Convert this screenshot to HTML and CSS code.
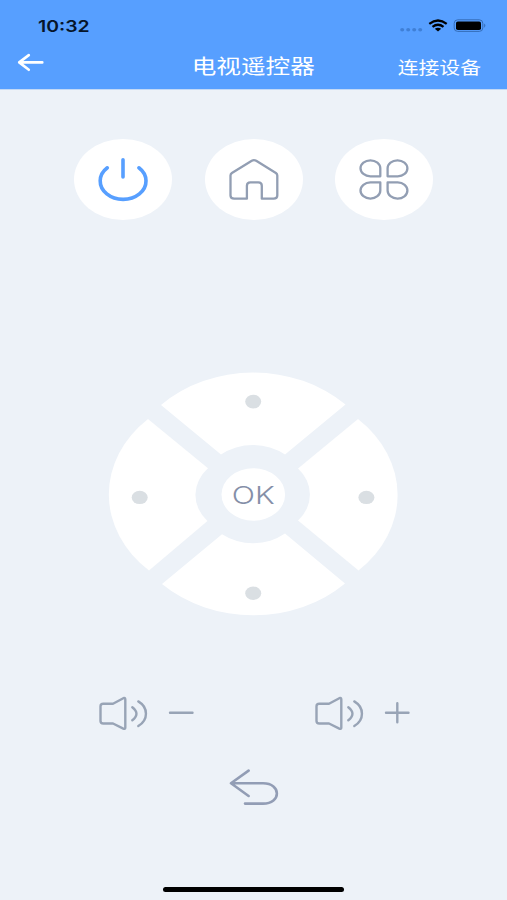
FILE: index.html
```html
<!DOCTYPE html>
<html lang="zh-CN">
<head>
    <meta charset="UTF-8">
    <meta name="viewport" content="width=device-width, initial-scale=1.0">
    <title>电视遥控器</title>
    <link rel="stylesheet" href="styles.css">
</head>
<body>

    <header class="header">
        <div class="status-bar">
            <span class="time">10:32</span>
            <svg class="status-icons" viewBox="400 16 88 20">
                <g fill="#3f7fd6">
                    <ellipse cx="402.2" cy="29.8" rx="2" ry="1.7"/>
                    <ellipse cx="408.2" cy="29.8" rx="2" ry="1.7"/>
                    <ellipse cx="414.2" cy="29.8" rx="2" ry="1.7"/>
                    <ellipse cx="420.2" cy="29.8" rx="2" ry="1.7"/>
                </g>
                <g fill="none" stroke="#000" stroke-width="2.3">
                    <path d="M429.3 23.8Q438 17.2 446.7 23.8"/>
                    <path d="M432.5 26.8Q438 22.6 443.5 26.8"/>
                </g>
                <path d="M434.8 28.8Q438 26.6 441.2 28.8L438 31.4Z"/>
                <rect x="454.2" y="19.8" width="28.6" height="11.6" rx="3.5" fill="none" stroke="#346db8"/>
                <rect x="456" y="21.4" width="25" height="8.6" rx="1.8"/>
                <path d="M484.2 23.5Q486.6 25.5 484.2 27.7Z" fill="#346db8"/>
            </svg>
        </div>
        <nav class="nav">
            <a class="back" href="#" aria-label="返回">
                <svg width="28" height="20" viewBox="17 52 28 20" fill="none" stroke="#fff" stroke-width="2.6" stroke-linecap="round" stroke-linejoin="round">
                    <path d="M42.3 62.4H19.2M28.8 55.1L19.2 62.4L28.8 69.8"/>
                </svg>
            </a>
            <h1 class="title">电视遥控器</h1>
            <a class="connect" href="#">连接设备</a>
        </nav>
    </header>

    <main class="remote">
        <div class="top-keys">
            <button class="round-key power" aria-label="电源">
                <svg viewBox="74 139 98 81">
                    <path d="M107.3 167.8A22.9 18.3 0 1 0 138.9 167.8M123 159.8V177"/>
                </svg>
            </button>
            <button class="round-key" aria-label="主页">
                <svg viewBox="205 139 98 81">
                    <path d="M230.5 175.4Q230.5 174 231.9 173L251.8 160.8Q254 159.6 256.2 160.8L275.9 173Q277.3 174 277.3 175.4V195.6Q277.3 198.7 273.6 198.7H261.8V185.8Q261.8 182.4 258.3 182.4H250.4Q246.9 182.4 246.9 185.8V198.7H234.2Q230.5 198.7 230.5 195.6Z"/>
                </svg>
            </button>
            <button class="round-key" aria-label="应用">
                <svg viewBox="335 139 98 81">
                    <path d="M380.3 176.3H370.4A9.9 8 0 1 1 380.3 168.3Z"/>
                    <path d="M387.6 176.3H397.7A9.9 8 0 1 0 387.6 168.3Z"/>
                    <path d="M380.3 182.4H370.4A9.9 8.1 0 1 0 380.3 190.5Z"/>
                    <path d="M387.6 182.4H397.7A9.9 8.1 0 1 1 387.6 190.5Z"/>
                </svg>
            </button>
        </div>

        <!-- direction pad: four sectors around the OK key -->
        <svg class="dpad" viewBox="109 373 288 242">
            <g fill="#fff">
                <path d="M161 405A130.4 109.6 0 0 1 345.5 404.5L285 454.6A50.6 42.5 0 0 0 221 454.6Z"/>
                <path d="M358 419A123.5 103.5 0 0 1 358.5 570.5L298 520.5A46 38.7 0 0 0 298 468.5Z"/>
                <path d="M345 583.5A130.4 109.6 0 0 1 162 584L222 534.3A50.6 42.5 0 0 0 285 533.6Z"/>
                <path d="M149 570.5A123 103 0 0 1 148 419L208 468.3A46 38.7 0 0 0 207.5 521Z"/>
                <ellipse cx="253.3" cy="494.5" rx="31.8" ry="26.3"/>
            </g>
            <g fill="#dadfe3">
                <ellipse cx="253.2" cy="401.6" rx="8" ry="6.9"/>
                <ellipse cx="366.4" cy="497.4" rx="8" ry="6.7"/>
                <ellipse cx="253.2" cy="593.2" rx="8" ry="6.7"/>
                <ellipse cx="139.7" cy="497.4" rx="8" ry="6.7"/>
            </g>
            <text class="ok" x="253.3" y="504" text-anchor="middle" textLength="43" lengthAdjust="spacingAndGlyphs">OK</text>
        </svg>

        <div class="volume">
            <button class="key" aria-label="音量减">
                <svg width="96" height="36" viewBox="97 695 96 36">
                    <path d="M102.3 703.7H112L122.3 698.2Q124.3 697.4 124.3 699.4V727.4Q124.3 729.4 122.3 728.6L112 723.5H102.3Q99.5 723.5 99.5 721V706.2Q99.5 703.7 102.3 703.7Z"/>
                    <path d="M131.3 707.3Q139.6 713.7 131.3 720.3M137.3 701.4C147.5 707.5 147.5 719.7 137.3 726M169 712.8H191.5"/>
                </svg>
            </button>
            <button class="key" aria-label="音量加">
                <svg width="96" height="36" viewBox="97 695 96 36">
                    <path d="M102.3 703.7H112L122.3 698.2Q124.3 697.4 124.3 699.4V727.4Q124.3 729.4 122.3 728.6L112 723.5H102.3Q99.5 723.5 99.5 721V706.2Q99.5 703.7 102.3 703.7Z"/>
                    <path d="M131.3 707.3Q139.6 713.7 131.3 720.3M137.3 701.4C147.5 707.5 147.5 719.7 137.3 726M169 712.8H191.5M180.3 703.3V722.3"/>
                </svg>
            </button>
        </div>

        <button class="key return" aria-label="返回">
            <svg width="52" height="40" viewBox="228 768 52 40">
                <path d="M248.6 770.6L231 783.3L248.6 796M231 783.3H263C281.5 783.3 281.5 803.6 263 803.6H245"/>
            </svg>
        </button>
    </main>

    <div class="home-indicator"></div>

</body>
</html>
```
FILE: styles.css
```css
body {
    margin: 0;
    height: 900px;
    display: flex;
    flex-direction: column;
    background-color: #edf2f8;
    font-family: "Noto Sans CJK SC", sans-serif;
    overflow: hidden;
}
svg {
    display: block;
}
button {
    padding: 0;
    border: none;
    background: none;
    cursor: pointer;
}
.header {
    height: 89px;
    background-color: #579fff;
    border-bottom: 1px solid #c3d9f6;
}
.status-bar {
    display: flex;
    justify-content: space-between;
    height: 36px;
    padding: 16px 19px 0 38px;
    box-sizing: border-box;
}
.time {
    font: 600 16px/20px Inter, sans-serif;
    color: #06152b;
    transform: scaleX(1.21);
    transform-origin: left;
}
.status-icons {
    width: 88px;
    height: 20px;
}
.nav {
    display: grid;
    grid-template-columns: 1fr auto 1fr;
    align-items: center;
    height: 53px;
    padding: 0 26px 0 17px;
    color: #fff;
}
.back {
    margin-bottom: 1px;
}
.title {
    margin: 4px 0 0 9px;
    font-size: 20.5px;
    line-height: 30px;
    font-weight: 400;
    transform: scaleX(1.2);
}
.connect {
    justify-self: end;
    margin-top: 8px;
    font-size: 17.5px;
    line-height: 26px;
    color: #fff;
    text-decoration: none;
    transform: scaleX(1.19);
    transform-origin: right;
}
.remote {
    flex: 1;
    display: flex;
    flex-direction: column;
    align-items: center;
}
.top-keys {
    display: flex;
    gap: 32.5px;
    margin-top: 49px;
}
.round-key {
    width: 98px;
    height: 81px;
    border-radius: 50%;
    background-color: #fff;
}
.round-key svg {
    width: 98px;
    height: 81px;
}
.round-key path {
    fill: none;
    stroke: #929eb3;
    stroke-width: 2.3;
    stroke-linejoin: round;
}
.power path {
    stroke: #579fff;
    stroke-width: 3.6;
    stroke-linecap: round;
}
.dpad {
    width: 288px;
    height: 242px;
    margin: 153px 1px 0 0;
    overflow: visible;
}
.ok {
    font: 350 24.5px Inter, sans-serif;
    fill: #858fa8;
}
.volume {
    display: flex;
    gap: 120px;
    margin: 80px 0 0;
}
.key path {
    fill: none;
    stroke: #98a4b6;
    stroke-width: 2.4;
    stroke-linecap: round;
    stroke-linejoin: round;
}
.return {
    margin-top: 37px;
}
.return path {
    stroke: #929db5;
    stroke-width: 2.6;
}
.home-indicator {
    width: 181px;
    height: 5px;
    margin: 0 auto 8px;
    border-radius: 3px;
    background-color: #000;
}
```
